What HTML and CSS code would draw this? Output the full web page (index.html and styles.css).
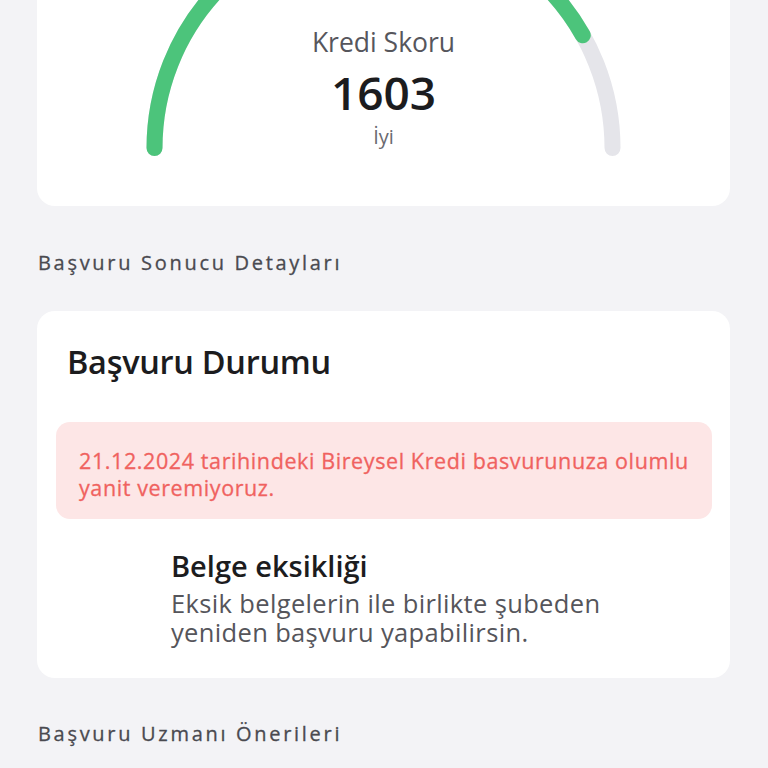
FILE: index.html
```html
<!DOCTYPE html>
<html lang="tr">
<head>
<meta charset="utf-8">
<link rel="stylesheet" href="styles.css">
</head>
<body>
<main class="page">
  <section class="card score-card">
    <svg class="gauge" width="693" height="290" viewBox="0 0 693 290" aria-hidden="true">
      <path d="M117.5 258 A229 229 0 0 1 575.5 258" fill="none" stroke="#e5e5ea" stroke-width="16" stroke-linecap="round"/>
      <path d="M117.5 258 A229 229 0 0 1 575.5 258" fill="none" stroke="#4cc47b" stroke-width="16" stroke-linecap="round" pathLength="100" stroke-dasharray="83.6 200"/>
    </svg>
    <div class="score-text">
      <div class="score-label">Kredi Skoru</div>
      <div class="score-value">1603</div>
      <div class="score-grade">İyi</div>
    </div>
  </section>

  <h2 class="section-title first">Başvuru Sonucu Detayları</h2>

  <section class="card status-card">
    <h1 class="status-title">Başvuru Durumu</h1>
    <div class="alert">21.12.2024 tarihindeki Bireysel Kredi basvurunuza olumlu<br>yanit veremiyoruz.</div>
    <div class="reason">
      <div class="reason-icon"></div>
      <div class="reason-body">
        <div class="reason-title">Belge eksikliği</div>
        <div class="reason-desc">Eksik belgelerin ile birlikte şubeden<br>yeniden başvuru yapabilirsin.</div>
      </div>
    </div>
  </section>

  <h2 class="section-title second">Başvuru Uzmanı Önerileri</h2>
</main>
</body>
</html>
```

FILE: styles.css
```css
* { box-sizing: border-box; }
html, body { margin: 0; padding: 0; }
body {
  background: #f3f3f6;
  font-family: "Open Sans", "Liberation Sans", sans-serif;
  color: #1c1c1e;
  height: 768px;
  overflow: hidden;
}
.page {
  padding: 0 38px 0 37px;
}
.card {
  background: #ffffff;
  border-radius: 18px;
}
.score-card {
  position: relative;
  margin-top: -110px;
  height: 316px;
}
.gauge {
  position: absolute;
  left: 0;
  top: 0;
}
.score-text {
  position: relative;
  display: flex;
  flex-direction: column;
  align-items: center;
  padding-top: 136px;
}
.score-label {
  font-size: 26.5px;
  line-height: 32px;
  color: #56565c;
}
.score-value {
  font-size: 46px;
  line-height: 52px;
  font-weight: 600;
  color: #1c1c1e;
  margin-top: 7.5px;
}
.score-grade {
  font-size: 20px;
  line-height: 26px;
  color: #6a6a70;
  margin-top: 6px;
}
.section-title {
  margin: 0;
  font-size: 20px;
  line-height: 24px;
  font-weight: 400;
  letter-spacing: 2.7px;
  color: #4a4a50;
  padding-left: 1px;
  -webkit-text-stroke: 0.3px #4a4a50;
}
.section-title.first {
  margin-top: 45px;
  margin-bottom: 36px;
}
.section-title.second {
  margin-top: 44px;
}
.status-card {
  padding: 31px 18px 31px 19px;
}
.status-title {
  margin: 0 0 40px 11px;
  font-size: 32.5px;
  line-height: 40px;
  font-weight: 600;
  letter-spacing: -0.3px;
  color: #1c1c1e;
}
.alert {
  background: #fde6e6;
  border-radius: 14px;
  padding: 24.5px 18px 18.5px 23px;
  font-size: 21.5px;
  line-height: 27px;
  letter-spacing: 0.6px;
  font-weight: 400;
  color: #f0625f;
  -webkit-text-stroke: 0.3px #f0625f;
  white-space: nowrap;
}
.reason {
  display: flex;
  margin-top: 30px;
}
.reason-icon {
  width: 115px;
  flex: none;
}
.reason-title {
  font-size: 29px;
  line-height: 34px;
  font-weight: 600;
  letter-spacing: 0px;
  color: #1c1c1e;
}
.reason-desc {
  font-size: 25.5px;
  line-height: 29px;
  letter-spacing: 0.35px;
  color: #55555b;
  margin-top: 6px;
}
```
